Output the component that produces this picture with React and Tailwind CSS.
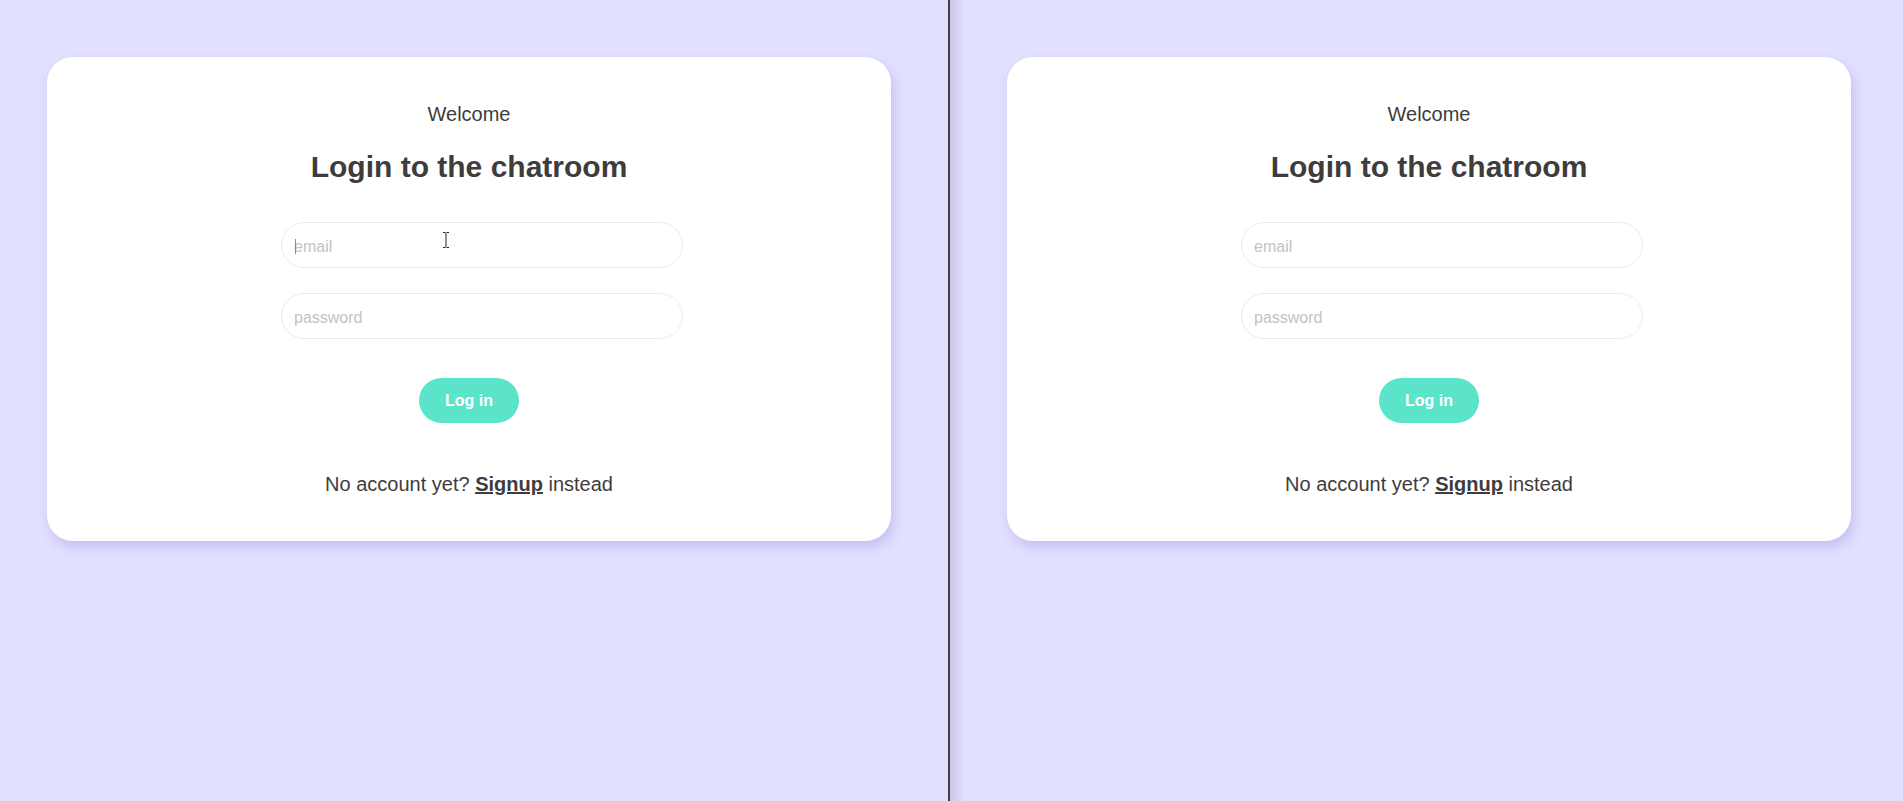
import React, { useState } from 'react'

const LoginCard = ({ focused }) => {
  const [email, setEmail] = useState('')
  const [password, setPassword] = useState('')

  return (
    <div className="w-[844px] h-[484px] bg-white rounded-[26px] shadow-[3px_6px_12px_rgba(118,108,200,0.28)] flex flex-col items-center pt-[45px] text-[#3e3c3c]">
      <p className="text-[20px] leading-[24px]">Welcome</p>
      <h2 className="mt-[23px] text-[30px] leading-[36px] font-bold">Login to the chatroom</h2>

      <div className="relative self-start ml-[234px] mt-[37px]">
        <input
          type="email"
          value={email}
          onChange={(e) => setEmail(e.target.value)}
          placeholder="email"
          className="w-[402px] h-[46px] rounded-full border border-[#ebebeb] pl-3 pr-4 pt-[3px] text-[16px] outline-none placeholder:text-[#c4c2c2]"
        />
        {focused && (
          <>
            <span className="absolute left-[14px] top-[17px] w-px h-[15px] bg-[#8a8a8a]" />
            {/* mouse pointer (I-beam) */}
            <svg className="absolute left-[161px] top-[10px]" width="8" height="16" viewBox="0 0 8 16">
              <path d="M1 0.5h2.5M4.5 0.5H7M1 15.5h2.5M4.5 15.5H7M4 1v14" stroke="#222" strokeWidth="1" fill="none" />
            </svg>
          </>
        )}
      </div>

      <input
        type="password"
        value={password}
        onChange={(e) => setPassword(e.target.value)}
        placeholder="password"
        className="self-start ml-[234px] mt-[25px] w-[402px] h-[46px] rounded-full border border-[#ebebeb] pl-3 pr-4 pt-[3px] text-[16px] outline-none placeholder:text-[#c4c2c2]"
      />

      <button className="mt-[39px] w-[100px] h-[45px] rounded-full bg-[#5ce4cb] text-white text-[16px] font-bold">
        Log in
      </button>

      <p className="mt-[49px] text-[20px] leading-[24px]">
        No account yet? <a href="#" className="font-bold underline">Signup</a> instead
      </p>
    </div>
  )
}

export default function App() {
  return (
    <div className="flex h-[801px] w-full overflow-hidden bg-[#e2e0ff] font-['Liberation_Sans',Arial,sans-serif]">
      <div className="w-[948px] shrink-0 pt-[57px] pl-[47px]">
        <LoginCard focused />
      </div>

      <div className="w-[2px] shrink-0 bg-[#463c3c]" />

      <div className="relative flex-1 pt-[57px] pl-[57px]">
        <div className="absolute left-0 top-0 h-full w-[14px] bg-gradient-to-r from-[#c9c6ea] to-transparent" />
        <LoginCard />
      </div>
    </div>
  )
}
